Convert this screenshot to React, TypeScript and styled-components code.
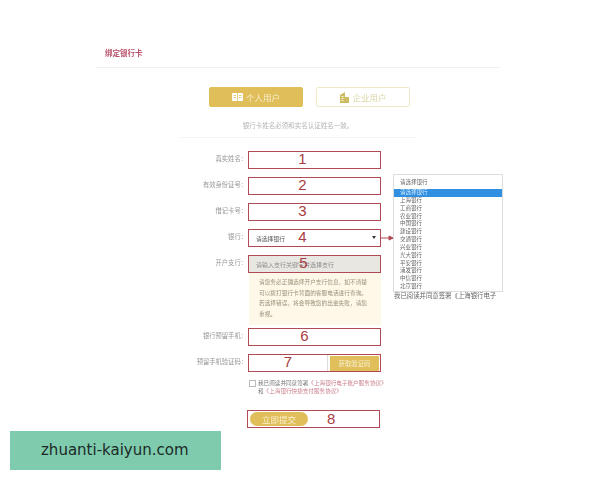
import styled, { createGlobalStyle } from "styled-components";

const GlobalStyle = createGlobalStyle`
  html, body {
    margin: 0;
    background: #fff;
    font-family: "Noto Sans CJK SC", "Liberation Sans", sans-serif;
  }
`;

const Page = styled.div`
  position: relative;
  width: 600px;
  height: 480px;
  overflow: hidden;
  box-sizing: border-box;
  padding: 0 100px 0 95px;
`;

const Header = styled.div`
  height: 68px;
  box-sizing: border-box;
  padding: 47px 0 0 10px;
  border-bottom: 1px solid #f1f1f1;
  color: #b8506a;
  font-size: 7.5px;
  line-height: 12px;
  font-weight: 700;
  filter: blur(0.3px);
`;

const Tabs = styled.div`
  display: flex;
  gap: 13px;
  margin: 19px 0 0 114px;
`;

const Tab = styled.div<{ $active?: boolean }>`
  width: 94px;
  height: 20px;
  box-sizing: border-box;
  display: flex;
  align-items: center;
  justify-content: center;
  gap: 3px;
  border-radius: 2px;
  border: 1px solid ${(p) => (p.$active ? "#e0be5a" : "#efe9c8")};
  background: ${(p) => (p.$active ? "#e0be5a" : "#fff")};
  color: ${(p) => (p.$active ? "#f8efcf" : "#dcd6a8")};
  font-size: 8.5px;
  filter: blur(0.3px);
`;

const Hint = styled.div`
  width: 236px;
  height: 20px;
  margin: 10px 0 0 85px;
  border-bottom: 1px solid #f3f3f3;
  color: #b4b4b4;
  font-size: 6.5px;
  line-height: 17px;
  text-align: center;
  filter: blur(0.3px);
`;

const Form = styled.div`
  display: flex;
  flex-direction: column;
  margin-top: 13px;
`;

const Row = styled.div<{ $gap?: number }>`
  display: flex;
  align-items: center;
  height: 18px;
  margin-top: ${(p) => p.$gap ?? 8}px;
`;

const Label = styled.div`
  width: 153px;
  box-sizing: border-box;
  padding: 0 1px 3px 0;
  text-align: right;
  color: #969696;
  font-size: 6.3px;
  filter: blur(0.25px);
`;

const Annotated = styled.div<{ $fill?: string }>`
  position: relative;
  width: 133px;
  height: 18px;
  box-sizing: border-box;
  display: flex;
  align-items: center;
  border: 1.5px solid #b04a55;
  background: ${(p) => p.$fill ?? "#fff"};
`;

const Number = styled.span<{ $right?: number }>`
  position: absolute;
  top: -2px;
  left: 0;
  right: ${(p) => p.$right ?? 24}px;
  text-align: center;
  color: #a83c42;
  font-family: "Liberation Sans", sans-serif;
  font-size: 15px;
  line-height: 18px;
`;

const FieldText = styled.span<{ $muted?: boolean }>`
  padding-left: 7px;
  color: ${(p) => (p.$muted ? "#8c8c8c" : "#555")};
  font-size: ${(p) => (p.$muted ? 6 : 5.8)}px;
  filter: blur(0.25px);
`;

const Caret = styled.span`
  position: absolute;
  right: 4px;
  top: 6px;
  width: 0;
  height: 0;
  border-left: 2px solid transparent;
  border-right: 2px solid transparent;
  border-top: 3px solid #333;
`;

const Notice = styled.div`
  width: 132px;
  height: 52px;
  margin-left: 154px;
  box-sizing: border-box;
  padding: 4px 12px 0 10px;
  background: #fdf8e8;
  color: #9a927c;
  font-size: 5.7px;
  line-height: 10.5px;
  filter: blur(0.25px);
`;

const CodeInput = styled.div`
  flex: 1;
  height: 100%;
  border-right: 1px solid #ddd;
`;

const CodeButton = styled.div`
  width: 49px;
  height: 15px;
  margin: 0 1px 0 2px;
  background: #e0be5a;
  color: #f9f0d0;
  font-size: 6.4px;
  line-height: 15px;
  text-align: center;
  filter: blur(0.25px);
`;

const Agreement = styled.div`
  margin: 7px 0 0 154px;
  display: grid;
  grid-template-columns: 8px 1fr;
  column-gap: 1px;
  color: #777;
  font-size: 5.6px;
  line-height: 8px;
  white-space: nowrap;
  filter: blur(0.25px);
`;

const Check = styled.span`
  width: 5px;
  height: 5px;
  margin-top: 1px;
  border: 1px solid #bbb;
`;

const Terms = styled.span`
  color: #c9808c;
`;

const SubmitBox = styled.div`
  display: flex;
  align-items: center;
  width: 133px;
  height: 18px;
  margin: 15px 0 0 152px;
  box-sizing: border-box;
  border: 1.5px solid #b04a55;
  padding-left: 2px;
`;

const Submit = styled.div`
  width: 58px;
  height: 14px;
  border-radius: 7px;
  background: #e0be5a;
  color: #f9f0d0;
  font-size: 8.5px;
  line-height: 14px;
  text-align: center;
  filter: blur(0.25px);
`;

const SubmitNumber = styled.span`
  margin-left: 19px;
  color: #a83c42;
  font-family: "Liberation Sans", sans-serif;
  font-size: 15px;
  line-height: 16px;
`;

const Arrow = styled.svg`
  position: absolute;
  left: 381px;
  top: 235px;
`;

const BehindText = styled.div`
  position: absolute;
  left: 394px;
  top: 292px;
  color: #666;
  font-size: 6.4px;
  line-height: 7px;
  white-space: nowrap;
  filter: blur(0.3px);
`;

const Dropdown = styled.div`
  position: absolute;
  left: 393px;
  top: 174px;
  width: 110px;
  height: 118px;
  box-sizing: border-box;
  border: 1px solid #ddd;
  background: #fff;
  color: #666;
  font-size: 5.5px;
  filter: blur(0.25px);
`;

const DropdownValue = styled.div`
  height: 14px;
  padding-left: 6px;
  line-height: 14px;
`;

const Option = styled.div<{ $selected?: boolean }>`
  height: 7.85px;
  padding-left: 6px;
  line-height: 7.85px;
  background: ${(p) => (p.$selected ? "#2f8fe0" : "transparent")};
  color: ${(p) => (p.$selected ? "#d8ecfb" : "#666")};
`;

const Watermark = styled.div`
  position: absolute;
  left: 10px;
  top: 431px;
  width: 211px;
  height: 39px;
  box-sizing: border-box;
  padding-left: 31px;
  background: #7fcbae;
  color: #1c2a26;
  font-family: "DejaVu Sans", sans-serif;
  font-size: 15px;
  line-height: 39px;
  white-space: nowrap;
`;

const banks = [
  "请选择银行",
  "上海银行",
  "工商银行",
  "农业银行",
  "中国银行",
  "建设银行",
  "交通银行",
  "兴业银行",
  "光大银行",
  "平安银行",
  "浦发银行",
  "中信银行",
  "北京银行",
];

function CardIcon() {
  return (
    <svg width="11" height="10" viewBox="0 0 11 10">
      <rect x="0" y="1" width="11" height="8" rx="1" fill="#fff" />
      <path d="M5.5 1v8" stroke="#e0be5a" strokeWidth="0.8" />
      <path d="M1.5 3.5h2.5M1.5 5.5h2.5M7 3.5h2.5M7 5.5h2.5" stroke="#e0be5a" strokeWidth="0.8" />
    </svg>
  );
}

function BuildingIcon() {
  return (
    <svg width="10" height="11" viewBox="0 0 10 11">
      <path d="M1 11V3l5-3v11zM6 5h4v6H6z" fill="#cdbb62" />
      <path d="M2.5 4.5h2M2.5 6.5h2M2.5 8.5h2" stroke="#fff" strokeWidth="0.8" />
    </svg>
  );
}

export default function App() {
  return (
    <Page>
      <GlobalStyle />
      <Header>绑定银行卡</Header>
      <Tabs>
        <Tab $active>
          <CardIcon />
          个人用户
        </Tab>
        <Tab>
          <BuildingIcon />
          企业用户
        </Tab>
      </Tabs>
      <Hint>银行卡姓名必须和实名认证姓名一致。</Hint>
      <Form>
        <Row $gap={0}>
          <Label>真实姓名：</Label>
          <Annotated>
            <Number>1</Number>
          </Annotated>
        </Row>
        <Row>
          <Label>有效身份证号：</Label>
          <Annotated>
            <Number>2</Number>
          </Annotated>
        </Row>
        <Row>
          <Label>借记卡号：</Label>
          <Annotated>
            <Number>3</Number>
          </Annotated>
        </Row>
        <Row>
          <Label>银行：</Label>
          <Annotated>
            <FieldText>请选择银行</FieldText>
            <Number>4</Number>
            <Caret />
          </Annotated>
        </Row>
        <Row>
          <Label>开户支行：</Label>
          <Annotated $fill="#e9e7e2">
            <FieldText $muted>请输入支行关键字并选择支行</FieldText>
            <Number $right={22}>5</Number>
          </Annotated>
        </Row>
        <Notice>
          请您务必正确选择开户支行信息，如不清楚可以拨打银行卡背面的客服电话进行查询。若选择错误，将会导致您的出金失败，请您重视。
        </Notice>
        <Row $gap={3}>
          <Label>银行预留手机：</Label>
          <Annotated>
            <Number $right={20}>6</Number>
          </Annotated>
        </Row>
        <Row>
          <Label>预留手机验证码：</Label>
          <Annotated>
            <CodeInput />
            <Number $right={53}>7</Number>
            <CodeButton>获取验证码</CodeButton>
          </Annotated>
        </Row>
        <Agreement>
          <Check />
          <span>
            我已阅读并同意签署<Terms>《上海银行电子账户服务协议》</Terms>
          </span>
          <span />
          <span>
            和<Terms>《上海银行快捷支付服务协议》</Terms>
          </span>
        </Agreement>
        <SubmitBox>
          <Submit>立即提交</Submit>
          <SubmitNumber>8</SubmitNumber>
        </SubmitBox>
      </Form>
      <Arrow width="12" height="6" viewBox="0 0 12 6">
        <path d="M0 3h12M8 1l4 2-4 2z" stroke="#b04a55" strokeWidth="1" fill="#b04a55" />
      </Arrow>
      <BehindText>我已阅读并同意签署《上海银行电子</BehindText>
      <Dropdown>
        <DropdownValue>请选择银行</DropdownValue>
        {banks.map((bank, i) => (
          <Option key={bank} $selected={i === 0}>
            {bank}
          </Option>
        ))}
      </Dropdown>
      <Watermark>zhuanti-kaiyun.com</Watermark>
    </Page>
  );
}
